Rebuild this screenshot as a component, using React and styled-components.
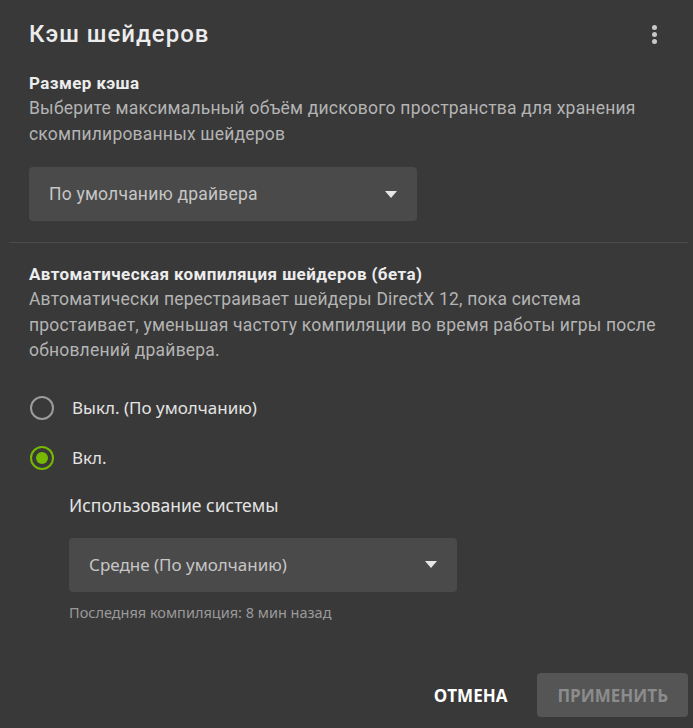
import React from "react";
import styled, { createGlobalStyle } from "styled-components";

const Global = createGlobalStyle`
  html, body { margin: 0; padding: 0; background: #393939; }
  * { box-sizing: border-box; }
`;

const Dialog = styled.div`
  width: 693px;
  height: 728px;
  background: #393939;
  display: flex;
  flex-direction: column;
  padding: 17px 5px 11px 0;
`;

const Header = styled.div`
  display: flex;
  align-items: center;
  justify-content: space-between;
  padding: 0 29px 0 29px;
  height: 34px;
`;

const Title = styled.h1`
  margin: 0;
  font-family: Roboto, "Liberation Sans", sans-serif;
  font-weight: 500;
  font-size: 24px;
  letter-spacing: 1px;
  color: #ececec;
`;

const Kebab = styled.button`
  border: 0;
  background: transparent;
  padding: 0;
  width: 10px;
  display: flex;
  flex-direction: column;
  align-items: center;
  gap: 2px;
  span {
    width: 5px;
    height: 5px;
    border-radius: 50%;
    background: #c8c8c8;
  }
`;

const Section = styled.section`
  padding: 0 0 0 29px;
  margin-top: ${(p) => p.$top}px;
`;

const Heading = styled.div`
  font-family: Roboto, "Liberation Sans", sans-serif;
  font-weight: 700;
  font-size: 17px;
  letter-spacing: 0.4px;
  line-height: 25px;
  color: #ededed;
`;

const Desc = styled.p`
  margin: 0;
  font-family: Roboto, "Liberation Sans", sans-serif;
  font-size: 17.5px;
  letter-spacing: 0.2px;
  line-height: 25.5px;
  color: #b4b4b4;
  max-width: 630px;
`;

const Select = styled.div`
  margin-top: 20px;
  width: 388px;
  height: 54px;
  background: #4a4a4a;
  border-radius: 4px;
  display: flex;
  align-items: center;
  justify-content: space-between;
  padding: 0 20px;
  font-family: ${(p) => (p.$alt ? '"Noto Sans", sans-serif' : 'Roboto, "Liberation Sans", sans-serif')};
  font-size: ${(p) => (p.$alt ? 17 : 17.5)}px;
  letter-spacing: ${(p) => (p.$alt ? 0 : 0.2)}px;
  color: #c6c6c6;
`;

const Caret = styled.span`
  width: 0;
  height: 0;
  border-left: 6.5px solid transparent;
  border-right: 6.5px solid transparent;
  border-top: 7px solid #e6e6e6;
`;

const Divider = styled.hr`
  margin: 21px 0 0 9px;
  border: 0;
  border-top: 1px solid #4b4b4b;
`;

const RadioGroup = styled.div`
  margin-top: 19px;
  display: flex;
  flex-direction: column;
`;

const RadioRow = styled.label`
  display: flex;
  align-items: center;
  height: 50px;
  gap: 18px;
  padding-left: 1px;
  font-family: "Noto Sans", sans-serif;
  font-size: 17px;
  color: #e4e4e4;
`;

const RadioCircle = styled.span`
  width: 24px;
  height: 24px;
  border-radius: 50%;
  border: 2px solid ${(p) => (p.$checked ? "#76b900" : "#9c9c9c")};
  display: flex;
  align-items: center;
  justify-content: center;
  &::after {
    content: "";
    width: 12px;
    height: 12px;
    border-radius: 50%;
    background: #76b900;
    display: ${(p) => (p.$checked ? "block" : "none")};
  }
`;

const Sub = styled.div`
  padding-left: 40px;
  margin-top: 10px;
`;

const SubLabel = styled.div`
  font-family: "Noto Sans", sans-serif;
  font-size: 17.5px;
  line-height: 25px;
  color: #e4e4e4;
`;

const Note = styled.div`
  margin-top: 10px;
  font-family: "Noto Sans", sans-serif;
  font-size: 14.5px;
  line-height: 20px;
  color: #9a9a9a;
`;

const Footer = styled.div`
  margin-top: auto;
  display: flex;
  justify-content: flex-end;
  align-items: center;
  gap: 14px;
`;

const Button = styled.button`
  height: 44px;
  border: 0;
  border-radius: 4px;
  padding: 0 ${(p) => (p.$primary ? 20 : 16)}px;
  background: ${(p) => (p.$primary ? "#555555" : "transparent")};
  color: ${(p) => (p.$primary ? "#8c8c8c" : "#ffffff")};
  font-family: "Open Sans", sans-serif;
  font-weight: 700;
  font-size: 17px;
`;

export default function App() {
  return (
    <>
      <Global />
      <Dialog>
        <Header>
          <Title>Кэш шейдеров</Title>
          <Kebab aria-label="menu">
            <span />
            <span />
            <span />
          </Kebab>
        </Header>
        <Section $top={20}>
          <Heading>Размер кэша</Heading>
          <Desc>
            Выберите максимальный объём дискового пространства для хранения
            скомпилированных шейдеров
          </Desc>
          <Select>
            По умолчанию драйвера
            <Caret />
          </Select>
        </Section>
        <Divider />
        <Section $top={19}>
          <Heading>Автоматическая компиляция шейдеров (бета)</Heading>
          <Desc>
            Автоматически перестраивает шейдеры DirectX 12, пока система
            простаивает, уменьшая частоту компиляции во время работы игры после
            обновлений драйвера.
          </Desc>
          <RadioGroup>
            <RadioRow>
              <RadioCircle />
              Выкл. (По умолчанию)
            </RadioRow>
            <RadioRow>
              <RadioCircle $checked />
              Вкл.
            </RadioRow>
          </RadioGroup>
          <Sub>
            <SubLabel>Использование системы</SubLabel>
            <Select $alt>
              Средне (По умолчанию)
              <Caret />
            </Select>
            <Note>Последняя компиляция: 8 мин назад</Note>
          </Sub>
        </Section>
        <Footer>
          <Button>ОТМЕНА</Button>
          <Button $primary>ПРИМЕНИТЬ</Button>
        </Footer>
      </Dialog>
    </>
  );
}
